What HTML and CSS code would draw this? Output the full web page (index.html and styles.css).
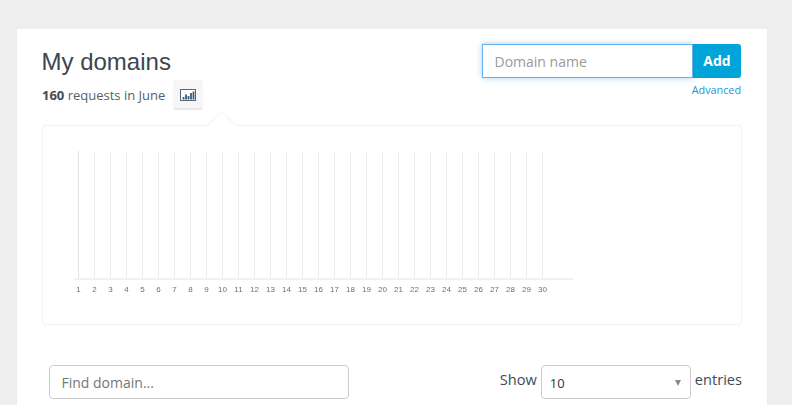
FILE: index.html
```html
<!DOCTYPE html>
<html lang="en">
<head>
    <meta charset="UTF-8">
    <title>My domains</title>
    <link rel="stylesheet" href="styles.css">
</head>
<body>

<div class="card">
    <div class="header">
        <div class="summary">
            <h1 class="title">My domains</h1>
            <div class="requests">
                <span><b>160</b> requests in June</span>
                <button class="chart-toggle" aria-label="Toggle chart">
                    <svg width="16" height="12" viewBox="0 0 16 12">
                        <rect x="0.5" y="0.5" width="15" height="11" fill="#fff" stroke="#5b6672"/>
                        <path d="M3.5 10.5V8M6 10.5V5.5M8.5 10.5V7M11 10.5V4M13.5 10.5V2.5" stroke="#34597c" stroke-width="1.8" fill="none"/>
                    </svg>
                </button>
            </div>
        </div>
        <div class="add-domain">
            <div class="add-row">
                <input class="domain-input" type="text" placeholder="Domain name">
                <button class="add-button">Add</button>
            </div>
            <a class="advanced" href="#">Advanced</a>
        </div>
    </div>

    <div class="chart-panel">
        <span class="chart-arrow"></span>
        <svg id="chart" class="chart" width="698" height="198"></svg>
    </div>

    <div class="controls">
        <input class="find-input" type="text" placeholder="Find domain...">
        <div class="entries">
            <span>Show</span>
            <div class="entries-select">10<span class="caret"></span></div>
            <span>entries</span>
        </div>
    </div>
</div>

<script>
    let chart = document.getElementById('chart');
    let markup = '<rect x="31" y="152" width="499" height="2" fill="#f0f0f0"/>';
    for (let i = 0; i < 30; i++) {
        let x = 35.5 + i * 16;
        let color = i === 0 ? '#e2e2e2' : '#efefef';
        markup += `<line x1="${x}" x2="${x}" y1="25" y2="152" stroke="${color}"/>`;
        markup += `<text x="${x}" y="166" text-anchor="middle">${i + 1}</text>`;
    }
    chart.innerHTML = markup;
</script>

</body>
</html>
```

FILE: styles.css
```css
* {
    box-sizing: border-box;
}

body {
    margin: 0;
    height: 405px;
    overflow: hidden;
    background-color: #eee;
    font-family: 'Open Sans', sans-serif;
    color: #3f4a55;
}

.card {
    width: 750px;
    height: 376px;
    margin: 29px 0 0 17px;
    padding: 15px 25px 0;
    background-color: #fff;
}

.header {
    display: flex;
    justify-content: space-between;
    height: 81px;
}

.title {
    margin: 3px 0 0 -0.5px;
    font-family: 'Liberation Sans', sans-serif;
    font-size: 24px;
    font-weight: 400;
    line-height: 30px;
    color: #3c4650;
}

.requests {
    display: flex;
    align-items: center;
    gap: 8px;
    margin-top: 3px;
    font-size: 13px;
    color: #55606b;
}

.requests b {
    color: #3f4a55;
}

.chart-toggle {
    display: flex;
    align-items: center;
    justify-content: center;
    width: 30px;
    height: 30px;
    padding: 1px 0 0;
    background-color: #f6f6f6;
    border: none;
    border-bottom: 2px solid #e8e8e8;
    border-radius: 3px;
}

.add-domain {
    display: flex;
    flex-direction: column;
    align-items: flex-end;
    width: 259px;
    margin-right: 1px;
}

.add-row {
    display: flex;
    height: 34px;
}

.domain-input {
    width: 211px;
    padding: 0 11.5px;
    font-family: 'Open Sans', sans-serif;
    font-size: 14px;
    border: 1px solid #66afe9;
    outline: none;
    box-shadow: 0 0 6px rgba(102, 175, 233, 0.6);
}

.domain-input::placeholder {
    color: #999;
}

.find-input::placeholder {
    color: #777;
}

.add-button {
    width: 48px;
    padding: 0 0 1px;
    font-family: 'Open Sans', sans-serif;
    font-size: 14px;
    font-weight: 700;
    color: #fff;
    background-color: #00a4d9;
    border: none;
    border-radius: 0 3px 3px 0;
}

.advanced {
    margin-top: 4px;
    font-size: 10.8px;
    line-height: 15px;
    color: #1597d8;
    text-decoration: none;
}

.chart-panel {
    position: relative;
    width: 700px;
    height: 200px;
    border: 1px solid #f2f2f2;
    border-radius: 4px;
}

.chart-arrow {
    position: absolute;
    top: -11px;
    left: 168px;
    width: 21px;
    height: 21px;
    background-color: #fff;
    border-top: 1px solid #f2f2f2;
    border-left: 1px solid #f2f2f2;
    transform: rotate(45deg);
}

.chart {
    display: block;
    position: relative;
    filter: grayscale(1);
}

.chart text {
    font-family: 'Liberation Sans', sans-serif;
    font-size: 8px;
    fill: #707070;
}

.controls {
    display: flex;
    justify-content: space-between;
    align-items: center;
    height: 34px;
    margin-top: 40px;
    padding-left: 7px;
}

.find-input {
    width: 300px;
    height: 34px;
    padding: 0 11.5px;
    font-family: 'Open Sans', sans-serif;
    font-size: 14px;
    border: 1px solid #ccc;
    border-radius: 4px;
    outline: none;
}

.entries {
    display: flex;
    align-items: flex-start;
    gap: 4px;
    font-size: 14.6px;
    line-height: 28px;
}

.entries-select {
    position: relative;
    width: 150px;
    height: 34px;
    padding: 3px 8px;
    font-size: 13px;
    color: #333;
    border: 1px solid #ccc;
    border-radius: 4px;
}

.caret {
    position: absolute;
    top: 14px;
    right: 9px;
    border-top: 6px solid #888;
    border-left: 3px solid transparent;
    border-right: 3px solid transparent;
}
```
